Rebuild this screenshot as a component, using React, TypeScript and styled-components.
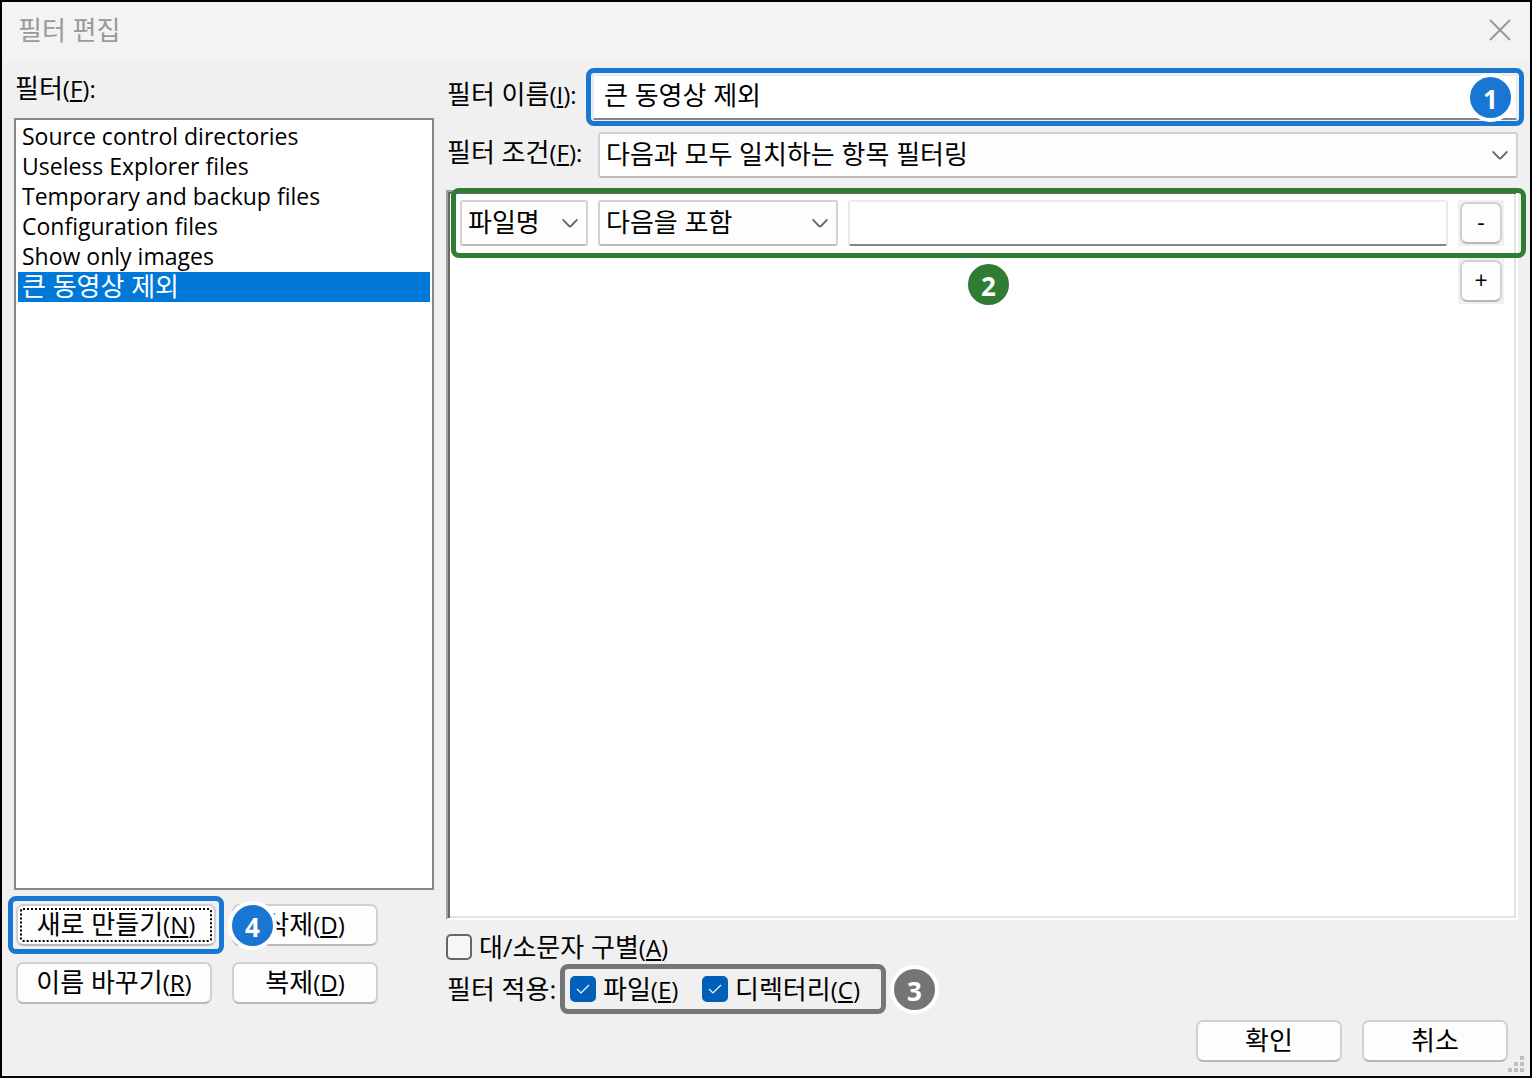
import React, { useState } from "react";
import styled, { createGlobalStyle, css } from "styled-components";

const sans = `"Open Sans", "Noto Sans CJK KR", sans-serif`;
const blue = "#1976d2";
const green = "#2e7d32";
const gray = "#757575";

const GlobalStyle = createGlobalStyle`
  *, *::before, *::after { box-sizing: border-box; }
  body { margin: 0; background: #f0f0f0; }
  button, input, select { font: inherit; color: inherit; margin: 0; }
`;

const Dialog = styled.main`
  position: relative;
  display: flex;
  flex-direction: column;
  min-height: 100vh;
  border: 2px solid #000;
  background: #f0f0f0;
  color: #000;
  font: 26px/30px ${sans};
`;

const TitleBar = styled.header`
  display: flex;
  align-items: center;
  justify-content: space-between;
  height: 60px;
  padding: 0 10px 4px 16px;
  background: #f3f3f3;
  color: #999;
`;

const Title = styled.h1`
  margin: 0;
  font-size: 26px;
  line-height: 30px;
  font-weight: 400;
`;

const CloseButton = styled.button`
  display: grid;
  place-items: center;
  width: 40px;
  height: 40px;
  padding: 0;
  border: 0;
  background: none;
  color: #999;
`;

const Columns = styled.div`
  flex: 1;
  display: grid;
  grid-template-columns: 420px minmax(0, 1fr);
  gap: 12px;
  padding: 12px 12px 0;
`;

const Column = styled.section`
  display: flex;
  flex-direction: column;
  min-width: 0;
`;

const ListLabel = styled.span`
  height: 44px;
  padding-left: 1px;
  line-height: 28px;
`;

const FilterList = styled.ul`
  flex: 1;
  margin: 0;
  padding: 2px;
  border: 2px solid #828790;
  background: #fff;
  list-style: none;
`;

const FilterOption = styled.li<{ $korean?: boolean }>`
  height: 30px;
  padding: 0 4px;
  font-size: ${(p) => (p.$korean ? 26 : 23)}px;
  line-height: 28px;
  white-space: nowrap;
  cursor: default;
  &[aria-selected="true"] {
    background: #0078d7;
    color: #fff;
  }
`;

const ListActions = styled.div`
  display: grid;
  grid-template-columns: 200px 146px;
  gap: 16px;
  padding: 14px 2px 0;
`;

const PushButton = styled.button<{ $width?: number; $focused?: boolean }>`
  width: ${(p) => (p.$width ? `${p.$width}px` : "100%")};
  height: 42px;
  padding: 0 0 2px;
  border: 2px solid #d0d0d0;
  border-bottom-color: #b8b8b8;
  border-radius: 7px;
  background: #fdfdfd;
  line-height: 30px;
  white-space: nowrap;
  ${(p) =>
    p.$focused &&
    css`
      outline: 2px dotted #000;
      outline-offset: -6px;
    `}
`;

const Anchor = styled.div`
  position: relative;
  display: flex;
`;

const FieldRow = styled.div`
  display: flex;
  height: 46px;
  margin-bottom: 12px;
`;

const FieldLabel = styled.label<{ $width: number }>`
  flex: none;
  width: ${(p) => p.$width}px;
  padding-left: 1px;
  line-height: 40px;
  white-space: nowrap;
`;

const FieldSlot = styled.div`
  position: relative;
  flex: 1;
  min-width: 0;
  display: flex;
`;

const TextInput = styled.input`
  flex: 1;
  min-width: 0;
  width: 100%;
  height: 46px;
  padding: 0 10px 6px;
  border: 2px solid #ebebeb;
  border-bottom-color: #858585;
  border-radius: 3px;
  background: #fff;
  outline: none;
`;

const SelectShell = styled.div`
  flex: 1;
  min-width: 0;
  display: grid;
  align-items: center;
`;

const NativeSelect = styled.select`
  grid-area: 1 / 1;
  width: 100%;
  height: 46px;
  padding: 0 40px 2px 6px;
  border: 2px solid #d2d2d2;
  border-bottom-color: #bababa;
  border-radius: 3px;
  background: #fdfdfd;
  appearance: none;
  outline: none;
`;

const Chevron = styled.svg`
  grid-area: 1 / 1;
  justify-self: end;
  margin-right: 10px;
  pointer-events: none;
`;

const RulePanel = styled.div`
  flex: 1;
  display: flex;
  flex-direction: column;
  gap: 12px;
  padding: 8px 12px;
  border: 2px solid;
  border-color: #a0a0a0 #fff #fff #a0a0a0;
  background: #fff;
  box-shadow: inset 2px 2px #696969, inset -2px -2px #e3e3e3;
`;

const RuleRow = styled.div`
  position: relative;
  display: grid;
  grid-template-columns: 128px 240px minmax(0, 1fr) 46px;
  gap: 10px;
`;

const SquareButtonCell = styled.div`
  grid-column: 4;
  padding: 2px;
  background: #f0f0f0;
`;

const SquareButton = styled(PushButton)`
  font-size: 23px;
`;

const HighlightFrame = styled.span<{ $color: string; $inset: string }>`
  position: absolute;
  inset: ${(p) => p.$inset};
  border: 5px solid ${(p) => p.$color};
  border-radius: 8px;
  pointer-events: none;
`;

const Badge = styled.span<{ $color: string; $place: string }>`
  position: absolute;
  inset: ${(p) => p.$place};
  z-index: 1;
  display: grid;
  place-items: center;
  width: 49px;
  height: 49px;
  padding-top: 2px;
  border: 4px solid #fff;
  border-radius: 50%;
  background: ${(p) => p.$color};
  color: #fff;
  font-weight: 700;
`;

const OptionRow = styled.div`
  display: flex;
  align-items: center;
  height: 30px;
  margin-top: 12px;
`;

const ApplyCaption = styled.span`
  flex: none;
  width: 124px;
  padding-left: 1px;
`;

const ApplyGroup = styled.div`
  position: relative;
  display: flex;
  align-items: center;
  height: 30px;
`;

const CheckLabel = styled.label<{ $width?: number }>`
  display: flex;
  align-items: center;
  gap: 7px;
  width: ${(p) => (p.$width ? `${p.$width}px` : "auto")};
  white-space: nowrap;
`;

const BoxShell = styled.span`
  display: grid;
  place-items: center;
  width: 26px;
  height: 26px;
`;

const BoxInput = styled.input`
  grid-area: 1 / 1;
  width: 26px;
  height: 26px;
  border: 2px solid #666;
  border-radius: 5px;
  background: #f6f6f6;
  appearance: none;
  &:checked {
    border-color: #005fb8;
    background: #005fb8;
  }
`;

const Tick = styled.svg`
  grid-area: 1 / 1;
  pointer-events: none;
`;

const Keys = styled.span`
  font-size: 24px;
  u {
    text-decoration-thickness: 2px;
    text-underline-offset: 2px;
  }
`;

const Footer = styled.footer`
  display: flex;
  justify-content: flex-end;
  gap: 20px;
  padding: 16px 22px 14px;
`;

const Grip = styled.svg`
  position: absolute;
  right: 6px;
  bottom: 4px;
`;

function AccessKey({ letter, colon }: { letter: string; colon?: boolean }) {
  return (
    <Keys>
      (<u>{letter}</u>){colon ? ":" : ""}
    </Keys>
  );
}

function Dropdown({ id, label, options }: { id?: string; label?: string; options: string[] }) {
  return (
    <SelectShell>
      <NativeSelect id={id} aria-label={label}>
        {options.map((o) => (
          <option key={o}>{o}</option>
        ))}
      </NativeSelect>
      <Chevron width="16" height="10" viewBox="0 0 16 10" fill="none" stroke="#666" strokeWidth="1.8">
        <path d="M0.6 1.4l6.4 6.6q1 1 2 0l6.4-6.6" />
      </Chevron>
    </SelectShell>
  );
}

function CheckBox({
  children,
  initial,
  width,
}: {
  children: React.ReactNode;
  initial: boolean;
  width?: number;
}) {
  const [on, setOn] = useState(initial);
  return (
    <CheckLabel $width={width}>
      <BoxShell>
        <BoxInput type="checkbox" checked={on} onChange={() => setOn(!on)} />
        {on && (
          <Tick width="16" height="12" viewBox="0 0 16 12" fill="none" stroke="#fff" strokeWidth="1.1">
            <path d="M2 6l4 4 8-8" />
          </Tick>
        )}
      </BoxShell>
      <span>{children}</span>
    </CheckLabel>
  );
}

const filters = [
  { name: "Source control directories" },
  { name: "Useless Explorer files" },
  { name: "Temporary and backup files" },
  { name: "Configuration files" },
  { name: "Show only images" },
  { name: "큰 동영상 제외", korean: true },
];

export default function App() {
  const [selected, setSelected] = useState(5);
  const [name, setName] = useState("큰 동영상 제외");
  const [value, setValue] = useState("");

  return (
    <>
      <GlobalStyle />
      <Dialog>
        <TitleBar>
          <Title>필터 편집</Title>
          <CloseButton aria-label="닫기">
            <svg width="22" height="22" viewBox="0 0 22 22" fill="none" stroke="currentColor" strokeWidth="2">
              <path d="M1 1l20 20M21 1L1 21" />
            </svg>
          </CloseButton>
        </TitleBar>

        <Columns>
          <Column>
            <ListLabel id="filter-list-label">
              필터
              <AccessKey letter="F" colon />
            </ListLabel>
            <FilterList role="listbox" aria-labelledby="filter-list-label">
              {filters.map((f, i) => (
                <FilterOption
                  key={f.name}
                  role="option"
                  aria-selected={i === selected}
                  $korean={f.korean}
                  onClick={() => setSelected(i)}
                >
                  {f.name}
                </FilterOption>
              ))}
            </FilterList>
            <ListActions>
              <Anchor>
                <PushButton $focused>
                  새로 만들기
                  <AccessKey letter="N" />
                </PushButton>
                <HighlightFrame $color={blue} $inset="-8px" />
                <Badge $color={blue} $place="-3px auto auto 212px">4</Badge>
              </Anchor>
              <PushButton>
                삭제
                <AccessKey letter="D" />
              </PushButton>
              <PushButton $width={196}>
                이름 바꾸기
                <AccessKey letter="R" />
              </PushButton>
              <PushButton>
                복제
                <AccessKey letter="D" />
              </PushButton>
            </ListActions>
          </Column>

          <Column>
            <FieldRow>
              <FieldLabel htmlFor="filter-name" $width={146}>
                필터 이름
                <AccessKey letter="I" colon />
              </FieldLabel>
              <FieldSlot>
                <TextInput id="filter-name" value={name} onChange={(e) => setName(e.target.value)} />
                <HighlightFrame $color={blue} $inset="-6px" />
                <Badge $color={blue} $place="-1px 3px auto auto">1</Badge>
              </FieldSlot>
            </FieldRow>
            <FieldRow>
              <FieldLabel htmlFor="filter-match" $width={152}>
                필터 조건
                <AccessKey letter="F" colon />
              </FieldLabel>
              <FieldSlot>
                <Dropdown id="filter-match" options={["다음과 모두 일치하는 항목 필터링"]} />
              </FieldSlot>
            </FieldRow>
            <RulePanel>
              <RuleRow>
                <Dropdown label="속성" options={["파일명"]} />
                <Dropdown label="비교" options={["다음을 포함"]} />
                <TextInput aria-label="값" value={value} onChange={(e) => setValue(e.target.value)} />
                <SquareButtonCell>
                  <SquareButton>-</SquareButton>
                </SquareButtonCell>
                <HighlightFrame $color={green} $inset="-12px -22px -12px -9px" />
                <Badge $color={green} $place="60px auto auto 504px">2</Badge>
              </RuleRow>
              <RuleRow>
                <SquareButtonCell>
                  <SquareButton>+</SquareButton>
                </SquareButtonCell>
              </RuleRow>
            </RulePanel>
            <OptionRow>
              <CheckBox initial={false}>
                대/소문자 구별
                <AccessKey letter="A" />
              </CheckBox>
            </OptionRow>
            <OptionRow>
              <ApplyCaption>필터 적용:</ApplyCaption>
              <ApplyGroup>
                <CheckBox initial width={132}>
                  파일
                  <AccessKey letter="E" />
                </CheckBox>
                <CheckBox initial width={174}>
                  디렉터리
                  <AccessKey letter="C" />
                </CheckBox>
                <HighlightFrame $color={gray} $inset="-10px" />
                <Badge $color={gray} $place="-9px -63px auto auto">3</Badge>
              </ApplyGroup>
            </OptionRow>
          </Column>
        </Columns>

        <Footer>
          <PushButton $width={146}>확인</PushButton>
          <PushButton $width={146}>취소</PushButton>
        </Footer>

        <Grip width="16" height="16" viewBox="0 0 16 16" fill="#bfbfbf" aria-hidden="true">
          <path d="M12 0h4v4h-4zM6 6h4v4H6zM12 6h4v4h-4zM0 12h4v4H0zM6 12h4v4H6zM12 12h4v4h-4z" />
        </Grip>
      </Dialog>
    </>
  );
}
